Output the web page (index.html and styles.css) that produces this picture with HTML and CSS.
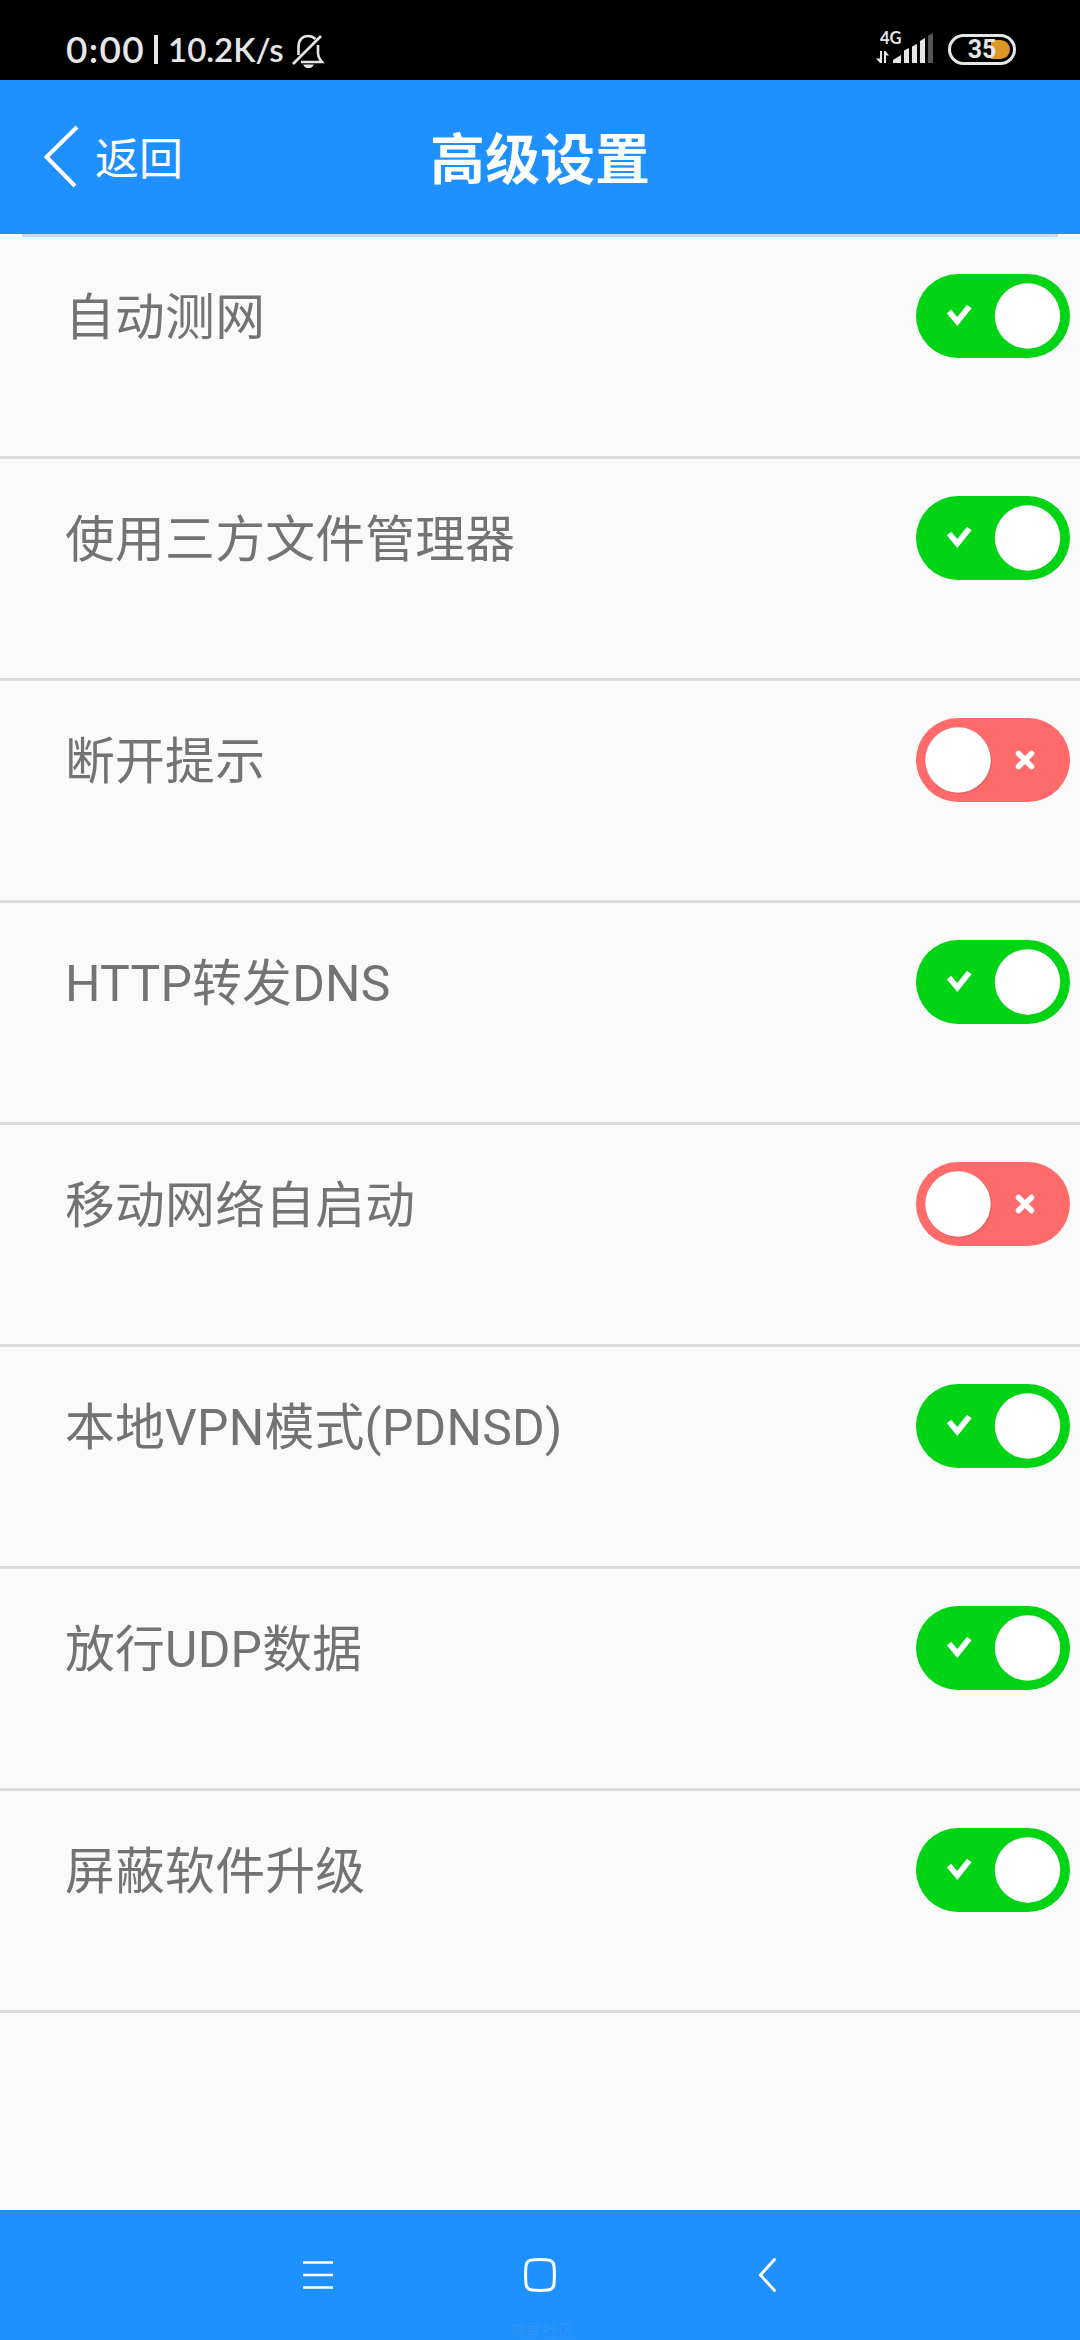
FILE: index.html
```html
<!DOCTYPE html>
<html lang="zh-CN">
<head>
<meta charset="utf-8">
<title>高级设置</title>
<link rel="stylesheet" href="styles.css">
</head>
<body>
<svg class="defs" width="0" height="0">
  <symbol id="on" viewBox="0 0 154 84">
    <rect width="154" height="84" rx="42" fill="#00d415"/>
    <circle cx="111.5" cy="42" r="32.7" fill="#fff"/>
    <path d="M33 37.500L41.300 47.500L53.300 32.500" fill="none" stroke="#fff" stroke-width="5.800"/>
  </symbol>
  <symbol id="off" viewBox="0 0 154 84">
    <rect width="154" height="84" rx="42" fill="#ff6b6b"/>
    <circle cx="43" cy="43" r="33" fill="#e86060"/>
    <circle cx="42" cy="42" r="32.700" fill="#fff"/>
    <path d="M102.500 35.500L115.500 48.500M115.500 35.500L102.500 48.500" fill="none" stroke="#fff" stroke-width="5.500" stroke-linecap="round"/>
  </symbol>
</svg>
<div class="screen">
  <div class="status">
    <span class="time">0:00</span>
    <span class="bar"></span>
    <span class="speed">10.2K/s</span>
    <svg class="bell" width="34" height="36" viewBox="0 0 34 36" fill="none" stroke="#e6e6e6" stroke-width="2.600">
      <path d="M2 31L30 3"/>
      <path d="M7.500 22V14C7.500 6.500 12 3 17 3C20 3 22.500 4 24.500 6"/>
      <path d="M27 12V20C27 24 28.500 26 31 29H10"/>
      <path d="M12 31.500H23C21.500 34.500 19.500 35 17.500 35S13.500 34.500 12 31.500Z" fill="#e6e6e6" stroke="none"/>
    </svg>
    <div class="network">
      <span class="gen">4G</span>
      <svg width="58" height="31" viewBox="0 0 58 31" fill="#e6e6e6">
        <path d="M4 19H6V31H4L0 26.500H4ZM8 31V19H9.500L13 23.500H10V31Z"/>
        <path d="M17 31V28L25 23V31Z"/>
        <path d="M28 31V18.500L33 16V31ZM36 31V14.500L41 12V31ZM44 31V9L49 6V31Z"/>
        <path d="M52 31V4L57 1V31Z" fill="#555"/>
      </svg>
    </div>
    <div class="battery"><span>35</span></div>
  </div>

  <header class="header">
    <div class="back">
      <svg width="36" height="64" viewBox="0 0 36 64"><path d="M33 2L2.500 32L31 61" fill="none" stroke="#fff" stroke-width="4"/></svg>
      <span>返回</span>
    </div>
    <h1>高级设置</h1>
  </header>

  <main class="list">
    <div class="row"><span>自动测网</span><svg class="switch"><use href="#on"/></svg></div>
    <div class="row"><span>使用三方文件管理器</span><svg class="switch"><use href="#on"/></svg></div>
    <div class="row"><span>断开提示</span><svg class="switch"><use href="#off"/></svg></div>
    <div class="row"><span>HTTP转发DNS</span><svg class="switch"><use href="#on"/></svg></div>
    <div class="row"><span>移动网络自启动</span><svg class="switch"><use href="#off"/></svg></div>
    <div class="row"><span>本地VPN模式(PDNSD)</span><svg class="switch"><use href="#on"/></svg></div>
    <div class="row"><span>放行UDP数据</span><svg class="switch"><use href="#on"/></svg></div>
    <div class="row"><span>屏蔽软件升级</span><svg class="switch"><use href="#on"/></svg></div>
  </main>

  <nav class="nav">
    <div class="keys">
      <svg width="32" height="34" viewBox="0 0 32 34"><path d="M1 4.500H31M1 17H31M1 29.500H31" fill="none" stroke="#fff" stroke-width="2.700"/></svg>
      <svg width="32" height="34" viewBox="0 0 32 34"><path d="M8 2Q16 1.200 24 2Q29.500 2.500 30 8Q30.800 17 30 26Q29.500 31.500 24 32Q16 32.800 8 32Q2.500 31.500 2 26Q1.200 17 2 8Q2.500 2.500 8 2Z" fill="none" stroke="#fff" stroke-width="3"/></svg>
      <svg width="32" height="34" viewBox="0 0 32 34"><path d="M16.500 1.500L2.500 17L16.500 32.500" fill="none" stroke="#fff" stroke-width="3" stroke-linejoin="round" stroke-linecap="round"/></svg>
    </div>
    <span class="mark">流星社区</span>
  </nav>
</div>
</body>
</html>
```
FILE: styles.css
```css
* { box-sizing: border-box; }
body {
  margin: 0;
  font-family: Roboto, "Noto Sans CJK SC", sans-serif;
}
.defs { display: block; }
.screen {
  width: 1080px;
  height: 2340px;
  display: flex;
  flex-direction: column;
  overflow: hidden;
  background: #fafafa;
}
.status {
  height: 80px;
  flex: none;
  display: flex;
  align-items: flex-start;
  padding: 31px 64px 0 66px;
  background: #000;
  color: #e6e6e6;
  font: 600 33px/36px Lato, sans-serif;
  white-space: nowrap;
}
.time { width: 88px; font-size: 37px; letter-spacing: 1.3px; }
.bar { width: 4px; height: 29px; margin-top: 4px; background: #e6e6e6; }
.speed { width: 133px; padding-left: 10px; }
.bell { margin-top: 2px; }
.network {
  width: 58px;
  height: 32px;
  margin: 1px 14px 0 auto;
  display: grid;
}
.network > * { grid-area: 1 / 1; }
.gen { padding-left: 4px; font-size: 16.5px; line-height: 12px; font-weight: 700; }
.battery {
  width: 68px;
  height: 31px;
  margin-top: 3px;
  border: 3px solid #e6e6e6;
  border-radius: 16px;
  padding: 3px;
  font: 700 25px/20px Roboto, sans-serif;
  text-align: center;
}
.battery span {
  display: block;
  height: 19px;
  border-radius: 10px;
  background: linear-gradient(90deg, transparent 37px, #dc9726 37px);
}
.header {
  height: 154px;
  flex: none;
  display: grid;
  grid-template-columns: 1fr auto 1fr;
  align-items: center;
  background: #1e90ff;
  color: #fff;
}
.header h1 { margin: 0; padding-top: 5px; font-size: 55px; line-height: 64px; font-weight: 700; }
.back { display: flex; align-items: center; gap: 15px; padding-left: 44px; font-size: 44px; }
.back span { padding-bottom: 3px; }
.list { flex: 1; }
.list::before {
  content: "";
  display: block;
  height: 3px;
  margin: 0 22px;
  background: #cad9e9;
}
.row {
  height: 222px;
  display: flex;
  align-items: flex-start;
  justify-content: space-between;
  padding: 36.700px 10px 0 65px;
  border-bottom: 3px solid #dbdbdb;
  color: #737373;
  font-size: 49.800px;
  letter-spacing: 0.250px;
  line-height: 88px;
}
.switch { width: 154px; height: 84px; }
.nav {
  height: 130px;
  flex: none;
  display: flex;
  flex-direction: column;
  align-items: center;
  padding-top: 48px;
  background: #1e90ff;
}
.keys {
  width: 488px;
  height: 34px;
  margin-left: 12px;
  display: grid;
  grid-template-columns: 222px 234px 32px;
}
.mark { margin: 31px 0 0 3px; font-size: 16.500px; line-height: 17px; color: #3096f5; }
```
